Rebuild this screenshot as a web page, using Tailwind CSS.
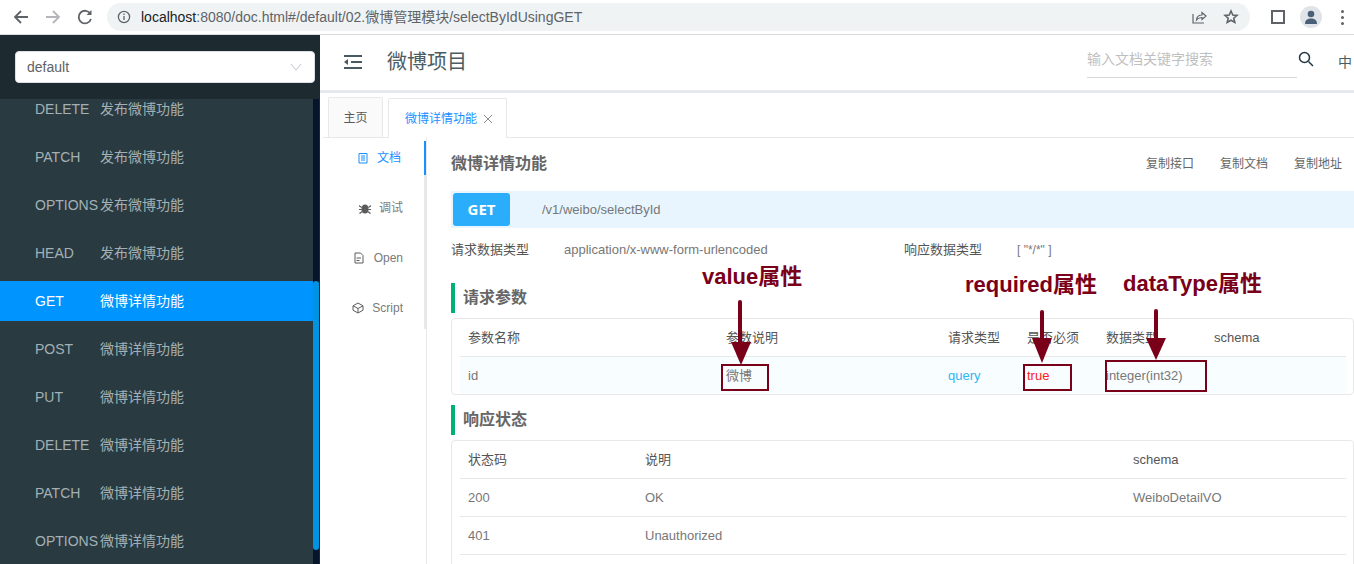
<!DOCTYPE html>
<html lang="en">
<head>
  <meta charset="UTF-8" />
  <title>微博项目</title>
  <script src="https://cdn.jsdelivr.net/npm/@tailwindcss/browser@4"></script>
</head>
<body class="relative w-[1354px] h-[564px] overflow-hidden bg-white font-['Liberation_Sans','Noto_Sans_CJK_SC',sans-serif]">

  <!-- Browser bar -->
  <div class="flex items-center h-[35px] border-b border-[#dadce0] bg-white">
    <svg class="ml-[12px] w-[18px] h-[18px]" viewBox="0 0 18 18" fill="none" stroke="#5f6368" stroke-width="1.8"><path d="M16 9H3M9 3 3 9l6 6"/></svg>
    <svg class="ml-[14px] w-[18px] h-[18px]" viewBox="0 0 18 18" fill="none" stroke="#b4b6b9" stroke-width="1.8"><path d="M2 9h13M9 3l6 6-6 6"/></svg>
    <svg class="ml-[14px] w-[18px] h-[18px]" viewBox="0 0 18 18" fill="none" stroke="#5f6368" stroke-width="1.8"><path d="M14.5 6A6.3 6.3 0 1 0 15 11"/><path d="M15.5 2v5h-5" fill="#5f6368" stroke="none"/></svg>
    <div class="ml-[13px] w-[1143px] h-[28px] rounded-full bg-[#eff3f4] flex items-center shrink-0">
      <svg class="ml-[10px] w-[14px] h-[14px]" viewBox="0 0 14 14" fill="none" stroke="#5f6368" stroke-width="1.3"><circle cx="7" cy="7" r="5.6"/><path d="M7 6v4M7 3.6v1.3"/></svg>
      <span class="ml-[10px] text-[14px] text-[#5f6368] whitespace-nowrap"><span class="text-[#202124]">localhost</span>:8080/doc.html#/default/02.微博管理模块/selectByIdUsingGET</span>
      <svg class="ml-auto w-[16px] h-[16px]" viewBox="0 0 16 16" fill="none" stroke="#5f6368" stroke-width="1.2"><path d="M2 5v9h11M5.500 11c.3-3.500 2.500-5 5.500-5V3.500L15 7l-4 3.500V8.500c-2 0-4 .6-5.500 2.500z"/></svg>
      <svg class="ml-[16px] mr-[3px] w-[16px] h-[16px]" viewBox="0 0 16 16" fill="none" stroke="#5f6368" stroke-width="1.6"><path d="m8 2 1.800 4 4.200.4-3.200 2.800 1 4.200L8 11.200l-3.800 2.200 1-4.200L2 6.400 6.200 6z"/></svg>
      <span class="w-[8px]"></span>
    </div>
    <div class="ml-[21px] w-[14px] h-[14px] border-[2px] border-l-[9px] border-[#5f6368] border-l-[#ffffff] outline-[2px] outline-[#5f6368] -outline-offset-2 shrink-0"></div>
    <div class="ml-[15px] w-[22px] h-[22px] rounded-full bg-[#e0e3e8] shrink-0 flex items-center justify-center">
      <svg class="w-[14px] h-[16px]" viewBox="0 0 14 16" fill="#4a6078"><circle cx="7" cy="5" r="3.300"/><path d="M1 15c0-4 2.500-5.500 6-5.500s6 1.500 6 5.500z"/></svg>
    </div>
    <div class="ml-[19px] flex flex-col gap-[3px] shrink-0">
      <span class="w-[3px] h-[3px] rounded-full bg-[#5f6368]"></span>
      <span class="w-[3px] h-[3px] rounded-full bg-[#5f6368]"></span>
      <span class="w-[3px] h-[3px] rounded-full bg-[#5f6368]"></span>
    </div>
  </div>

  <div class="flex h-[529px]">
    <!-- Sidebar -->
    <aside class="w-[320px] shrink-0 flex flex-col bg-[#2a3a41]">
      <div class="h-[64px] shrink-0 bg-[#1d2a30] pt-[16px] pl-[15px]">
        <div class="w-[300px] h-[32px] bg-white rounded-[4px] border border-[#dcdfe6] flex items-center pl-[11px] pr-[12px] text-[14px] text-[#606266]">
          default
          <svg class="ml-auto w-[12px] h-[8px]" viewBox="0 0 12 8" fill="none" stroke="#c0c4cc"><path d="m1 1 5 6 5-6"/></svg>
        </div>
      </div>
      <div class="flex-1 flex min-h-0">
        <div class="w-[313px] overflow-hidden">
          <ul class="-mt-[10px] flex flex-col gap-[8px] text-[14px] text-[#a3b1b5]">
            <li class="h-[40px] flex items-center pl-[35px]"><span class="w-[65px] shrink-0">DELETE</span>发布微博功能</li>
            <li class="h-[40px] flex items-center pl-[35px]"><span class="w-[65px] shrink-0">PATCH</span>发布微博功能</li>
            <li class="h-[40px] flex items-center pl-[35px]"><span class="w-[65px] shrink-0">OPTIONS</span>发布微博功能</li>
            <li class="h-[40px] flex items-center pl-[35px]"><span class="w-[65px] shrink-0">HEAD</span>发布微博功能</li>
            <li class="h-[40px] flex items-center pl-[35px] bg-[#0094ff] text-white"><span class="w-[65px] shrink-0">GET</span>微博详情功能</li>
            <li class="h-[40px] flex items-center pl-[35px]"><span class="w-[65px] shrink-0">POST</span>微博详情功能</li>
            <li class="h-[40px] flex items-center pl-[35px]"><span class="w-[65px] shrink-0">PUT</span>微博详情功能</li>
            <li class="h-[40px] flex items-center pl-[35px]"><span class="w-[65px] shrink-0">DELETE</span>微博详情功能</li>
            <li class="h-[40px] flex items-center pl-[35px]"><span class="w-[65px] shrink-0">PATCH</span>微博详情功能</li>
            <li class="h-[40px] flex items-center pl-[35px]"><span class="w-[65px] shrink-0">OPTIONS</span>微博详情功能</li>
          </ul>
        </div>
        <!-- Scrollbar -->
        <div class="w-[6px] bg-[#06152b] pt-[182px]">
          <div class="h-[269px] rounded-[3px] bg-[#0094e0]"></div>
        </div>
        <div class="w-px bg-[#1d2a30]"></div>
      </div>
    </aside>

    <!-- Main -->
    <main class="flex-1 min-w-0 flex flex-col bg-white">
      <header class="h-[58px] shrink-0 flex items-center border-b-[3px] border-[#e6eaee] pb-px">
        <svg class="ml-[24px] w-[18px] h-[14px]" viewBox="0 0 18 14" fill="#4a5a63"><path d="M0 0h18v2H0zM7 6h11v2H7zM0 12h18v2H0zM0 7l4-3v6z"/></svg>
        <span class="ml-[25px] text-[20px] text-[#4d5b63]">微博项目</span>
        <div class="ml-auto mt-[1px] w-[210px] h-[31px] border-b border-[#d9d9d9] text-[14px] leading-[24px] text-[#bfbfbf]">输入文档关键字搜索</div>
        <svg class="ml-[1px] w-[16px] h-[16px] -mt-[6px]" viewBox="0 0 16 16" fill="none" stroke="#1f3645" stroke-width="1.500"><circle cx="6.500" cy="6.500" r="5"/><path d="m10.500 10.500 4.500 4.500"/></svg>
        <span class="ml-[24px] text-[14px] text-[#4a5a63] w-[16px] shrink-0 overflow-hidden whitespace-nowrap">中</span>
      </header>

      <!-- Tabs -->
      <div class="h-[45px] shrink-0 flex items-end border-b border-[#e8e8e8] pl-[8px] gap-[5px] ml-[3px] -mb-px">
        <div class="w-[55px] h-[40px] -ml-[3px] border border-b-0 border-[#e8e8e8] rounded-t-[2px] bg-[#fafafa] flex items-center justify-center text-[12px] text-[#595959]">主页</div>
        <div class="w-[119px] h-[40px] border border-b-0 border-[#e8e8e8] rounded-t-[2px] bg-white flex items-center pl-[16px] text-[12px] text-[#1890ff] -mb-px">微博详情功能
          <svg class="ml-[6px] w-[10px] h-[10px]" viewBox="0 0 10 10" stroke="#8c8c8c" fill="none"><path d="m1 1 8 8M9 1 1 9"/></svg>
        </div>
      </div>

      <div class="flex-1 flex min-h-0 pl-[8px]">
        <!-- Doc nav -->
        <div class="w-[99px] shrink-0 border-r border-[#e8e8e8]">
          <nav class="w-[98px] h-[188px] mt-[4px] border-r-2 border-[#e8e8e8] text-[12px] text-[#7a7a7a] flex flex-col gap-[16px] items-stretch">
            <div class="h-[34px] -mr-[2px] pr-[23px] border-r-2 border-[#1890ff] flex items-center justify-end gap-[8px] text-[#1890ff]">
              <svg class="w-[12px] h-[12px]" viewBox="0 0 12 12" fill="none" stroke="#1890ff"><path d="M2 1.500h8v9.500H2zM4 4h4M4 6h4M4 8h4"/></svg>文档</div>
            <div class="h-[34px] pr-[21px] flex items-center justify-end gap-[8px]">
              <svg class="w-[12px] h-[12px]" viewBox="0 0 12 12" fill="#5c5c5c"><ellipse cx="6" cy="7" rx="3.500" ry="4.500"/><path d="M0 3l3 2-.5 1L0 4.500zM12 3 9 5l.5 1L12 4.500zM0 7h3v1H0zM9 7h3v1H9zM0 11l3-2 .5 1-2.500 2zM12 11 9 9l-.5 1 2.500 2z"/></svg>调试</div>
            <div class="h-[34px] pr-[21px] flex items-center justify-end gap-[9px]">
              <svg class="w-[12px] h-[12px]" viewBox="0 0 12 12" fill="none" stroke="#5c5c5c"><path d="M2 1h5.500L10 3.500V11H2zM3.500 6H8M3.500 8.500h3" /></svg>Open</div>
            <div class="h-[34px] pr-[21px] flex items-center justify-end gap-[8px]">
              <svg class="w-[12px] h-[12px]" viewBox="0 0 12 12" fill="none" stroke="#5c5c5c"><path d="M6 1 11 3.800V8.200L6 11 1 8.200V3.800zM1 3.800 6 6.500l5-2.700M6 6.500V11"/></svg>Script</div>
          </nav>
        </div>

        <!-- Doc content -->
        <section class="flex-1 min-w-0 pl-[24px] text-[#777]">
          <div class="flex items-center h-[54px]">
            <h2 class="text-[16px] font-bold text-[#666]">微博详情功能</h2>
            <div class="ml-auto flex gap-[26px] text-[12px] text-[#666] pr-[12px]">
              <span>复制接口</span><span>复制文档</span><span>复制地址</span>
            </div>
          </div>
          <div class="h-[37px] bg-[#e8f5fe] flex items-center pl-[2px]">
            <div class="w-[57px] h-[33px] rounded-[3px] bg-[#2aaefc] text-white font-bold text-[15px] flex items-center justify-center font-['Open_Sans',sans-serif]">GET</div>
            <span class="ml-[32px] text-[13px] text-[#777]">/v1/weibo/selectById</span>
          </div>
          <div class="h-[44px] flex items-center text-[13px]">
            <span class="w-[113px] text-[#555]">请求数据类型</span>
            <span class="w-[340px] text-[#777]">application/x-www-form-urlencoded</span>
            <span class="w-[113px] text-[#555]">响应数据类型</span>
            <span class="text-[#777] text-[12px]">[ "*/*" ]</span>
          </div>

          <h3 class="mt-[11px] h-[30px] border-l-[4px] border-[#00b074] pl-[8px] flex items-center text-[16px] font-bold text-[#666]">请求参数</h3>
          <div class="mt-[5px] h-[77px] border border-[#e8e8e8] rounded-[4px] pl-[8px] pr-[7px] text-[13px] overflow-hidden">
            <div class="h-[38px] flex items-center border-b border-[#e8e8e8] text-[#555]">
              <span class="w-[266px] pl-[8px]">参数名称</span><span class="w-[222px]">参数说明</span><span class="w-[79px]">请求类型</span><span class="w-[79px]">是否必须</span><span class="w-[108px]">数据类型</span><span>schema</span>
            </div>
            <div class="h-[37px] flex items-center bg-[#f8fdff]">
              <span class="w-[266px] pl-[8px]">id</span><span class="w-[222px]">微博</span><span class="w-[79px] text-[#2db7f5] font-medium">query</span><span class="w-[79px] text-[#ff2020]">true</span><span class="w-[108px]">integer(int32)</span>
            </div>
          </div>

          <h3 class="mt-[10px] h-[30px] border-l-[4px] border-[#00b074] pl-[8px] flex items-center text-[16px] font-bold text-[#666]">响应状态</h3>
          <div class="mt-[5px] h-[140px] border border-[#e8e8e8] rounded-[4px] pl-[8px] pr-[7px] text-[13px] overflow-hidden">
            <div class="h-[38px] flex items-center border-b border-[#e8e8e8] text-[#555]">
              <span class="w-[185px] pl-[8px]">状态码</span><span class="w-[488px]">说明</span><span>schema</span>
            </div>
            <div class="h-[38px] flex items-center border-b border-[#e8e8e8]">
              <span class="w-[185px] pl-[8px]">200</span><span class="w-[488px]">OK</span><span>WeiboDetailVO</span>
            </div>
            <div class="h-[38px] flex items-center border-b border-[#e8e8e8]">
              <span class="w-[185px] pl-[8px]">401</span><span class="w-[488px]">Unauthorized</span>
            </div>
          </div>
        </section>
      </div>
    </main>
  </div>

  <!-- Annotations drawn over the screenshot -->
  <svg class="absolute left-0 top-0 w-[1354px] h-[564px] pointer-events-none" viewBox="0 0 1354 564" fill="#7a0019">
    <rect x="738" y="300" width="4" height="45" rx="2"/><path d="M731 342h20l-10 23z"/>
    <rect x="1040" y="310" width="4" height="32" rx="2"/><path d="M1032 338h20l-10 25z"/>
    <rect x="1154" y="309" width="4" height="32" rx="2"/><path d="M1146 338h20l-10 22z"/>
    <g fill="none" stroke="#7a0019" stroke-width="2">
      <rect x="722" y="365" width="46" height="25"/>
      <rect x="1024" y="365" width="47" height="25"/>
      <rect x="1106" y="361" width="100" height="30"/>
    </g>
  </svg>
  <span class="absolute left-[702px] top-[263px] text-[22px] leading-[28px] font-bold text-[#7a0019]">value属性</span>
  <span class="absolute left-[965px] top-[271px] text-[22px] leading-[28px] font-bold text-[#7a0019]">required属性</span>
  <span class="absolute left-[1123px] top-[270px] text-[22px] leading-[28px] font-bold text-[#7a0019]">dataType属性</span>
</body>
</html>
